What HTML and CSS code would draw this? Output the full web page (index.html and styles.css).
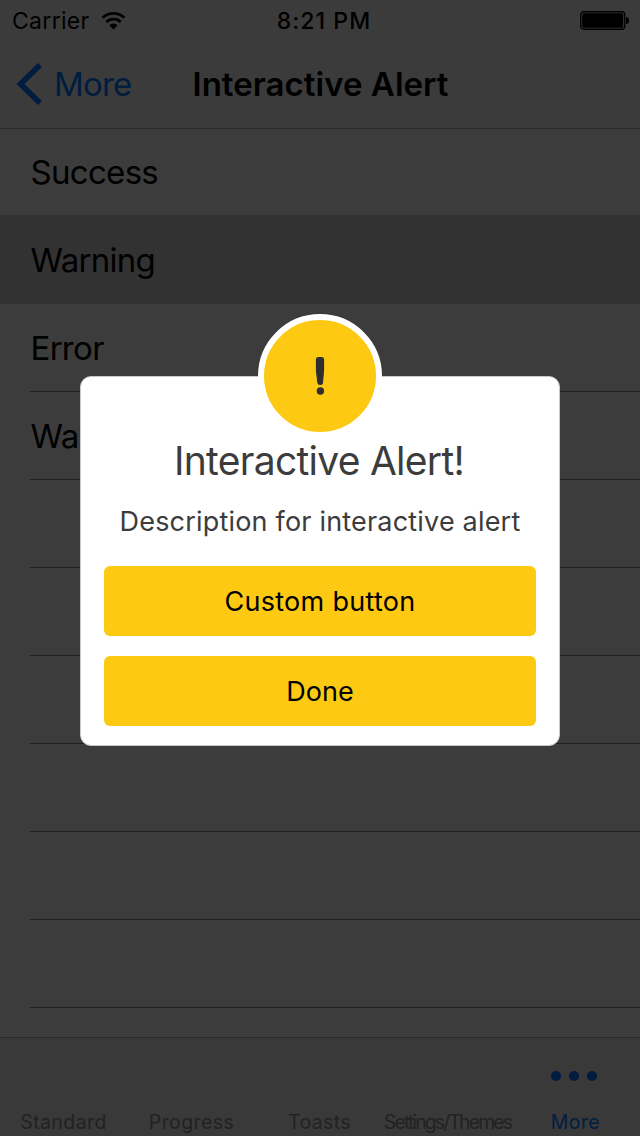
FILE: index.html
```html
<!DOCTYPE html>
<html lang="en">
<head>
<meta charset="utf-8">
<title>Interactive Alert</title>
<link rel="stylesheet" href="styles.css">
</head>
<body>
<div class="screen">
  <header class="header">
    <div class="status">
      <div class="carrier"><span>Carrier</span>
        <svg class="wifi" width="25" height="19" viewBox="0 0 26 20" fill="none" stroke="#000" stroke-width="3"><path d="M1.5 7.2a16.5 16.5 0 0 1 23 0M5.5 11.6a10.8 10.8 0 0 1 15 0"/><path d="M8.6 15a6.2 6.2 0 0 1 8.8 0L13 19.4z" fill="#000" stroke="none"/></svg>
      </div>
      <div class="time">8:21 PM</div>
      <svg class="battery" width="50" height="20" viewBox="0 0 50 20"><rect x=".75" y=".75" width="44" height="17.5" rx="3" fill="none" stroke="#000" stroke-width="1.3"/><rect x="2.2" y="2.2" width="41" height="14.6" rx="1.5"/><path d="M46 6c4 0 4 7 0 7z"/></svg>
    </div>
    <nav class="nav">
      <div class="back"><svg width="26" height="42" viewBox="0 0 26 42" fill="none" stroke="#001d40" stroke-width="5.6"><path d="M24 2 4.5 21 24 40"/></svg><span>More</span></div>
      <h1 class="title">Interactive Alert</h1>
    </nav>
  </header>
  <main class="list">
    <div class="row first">Success</div>
    <div class="row selected">Warning</div>
    <div class="row">Error</div>
    <div class="row">Warning</div>
    <div class="row"></div><div class="row"></div><div class="row"></div><div class="row"></div><div class="row"></div><div class="row"></div>
  </main>
  <footer class="tabs">
    <div class="tab">Standard</div>
    <div class="tab">Progress</div>
    <div class="tab">Toasts</div>
    <div class="tab themes">Settings/Themes</div>
    <div class="tab active"><svg width="48" height="12" viewBox="0 0 48 12" fill="#001d40"><circle cx="6" cy="6" r="5.1"/><circle cx="24" cy="6" r="5.1"/><circle cx="42" cy="6" r="5.1"/></svg><span class="more">More</span></div>
  </footer>
  <section class="alert">
    <div class="badge"><svg width="112" height="112" viewBox="0 0 112 112" fill="#2e2e2e"><path d="M51.900 39.500Q51.900 37 54.500 37H57.500Q60.100 37 60.100 39.500V49C60.100 54 59.300 58 59.100 62.500Q58.900 65 56.200 65T53.200 62.500C53 58 51.900 54 51.900 49z"/><circle cx="56.400" cy="71" r="3.700"/></svg></div>
    <h2 class="heading">Interactive Alert!</h2>
    <p class="description">Description for interactive alert</p>
    <button class="button">Custom button</button>
    <button class="button done">Done</button>
  </section>
</div>
</body>
</html>
```

FILE: styles.css
```css
* { box-sizing: border-box; }
body { margin: 0; background: #3c3c3c; font-family: Inter, "Liberation Sans", sans-serif; color: #000; }
.screen { position: relative; width: 640px; height: 1136px; overflow: hidden; display: flex; flex-direction: column; }
.header { height: 128px; flex: none; background: #3b3b3b; }
.status { height: 40px; display: grid; grid-template-columns: 1fr auto 1fr; align-items: center; padding: 2px 10px 0 12px; font-size: 23px; }
.carrier { display: flex; align-items: center; gap: 11px; letter-spacing: .3px; }
.wifi { margin-top: -2px; }
.time { font-weight: 550; letter-spacing: 1.05px; margin-left: 6px; }
.battery { justify-self: end; }
.nav { height: 88px; display: grid; grid-template-columns: 1fr auto 1fr; align-items: center; padding: 0 16px; font-size: 33px; }
.back { display: flex; align-items: center; gap: 12px; color: #001d40; letter-spacing: -.8px; }
.title { margin: 0 0 0 1px; font-size: 33px; font-weight: 600; letter-spacing: .03px; }
.list { flex: none; height: 909px; overflow: hidden; }
.row { height: 88px; display: flex; align-items: center; padding-left: 30.5px; font-size: 33px; letter-spacing: -.7px; background: linear-gradient(#1f1f1f, #1f1f1f) 30px 87px / 610px 1px no-repeat; }
.first { height: 87px; border-top: 1px solid #292929; background: none; }
.selected { height: 89px; background: #323232; }
.tabs { height: 99px; flex: none; border-top: 1px solid #292929; background: #393939; display: grid; grid-template-columns: repeat(5, minmax(0, 1fr)); color: #222; font-size: 19.5px; line-height: 24px; letter-spacing: .4px; }
.tab { display: flex; flex-direction: column; align-items: center; justify-content: flex-end; gap: 28px; padding: 0 1px 2px 0; white-space: nowrap; }
.themes { letter-spacing: -1.9px; }
.active { padding-right: 4px; color: #001d40; }
.more { margin-left: 3px; }
.alert { position: absolute; left: 80px; top: 376px; width: 480px; height: 370px; display: flex; flex-direction: column; align-items: center; background: #fff; border: 1px solid #c8c8c8; border-radius: 11px; color: #3c3c3c; }
.badge { width: 124px; height: 124px; margin-top: -63px; flex: none; border: 6px solid #fff; border-radius: 50%; background: #fdc912; }
.badge svg { display: block; }
.heading { margin: -1px 0 0 -2px; font-size: 39px; line-height: 48px; font-weight: 400; letter-spacing: -.72px; white-space: nowrap; }
.description { margin: 19px 0 26px; font-size: 27px; line-height: 36px; letter-spacing: .19px; white-space: nowrap; }
.button { width: 432px; height: 70px; flex: none; margin: 0 0 20px; padding: 0; border: 0; border-radius: 6px; background: #fdc912; color: #000; font: 27px Inter, "Liberation Sans", sans-serif; letter-spacing: .3px; }
.done { letter-spacing: 0; }
```
